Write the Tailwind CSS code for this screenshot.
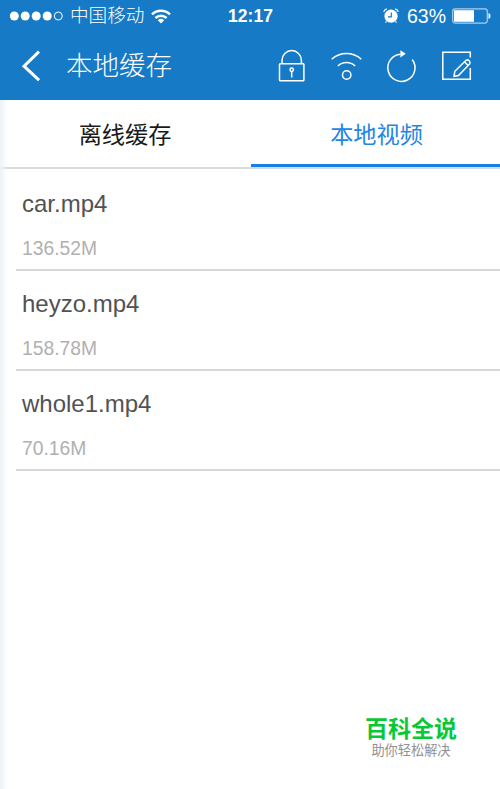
<!DOCTYPE html>
<html lang="zh-CN">
<head>
  <meta charset="UTF-8" />
  <meta name="viewport" content="width=device-width, initial-scale=1.0"/>
  <title>本地缓存</title>
  <script src="https://cdn.jsdelivr.net/npm/@tailwindcss/browser@4"></script>
</head>
<body class="relative flex h-[789px] flex-col overflow-hidden bg-white font-['Liberation_Sans','Noto_Sans_CJK_SC',sans-serif]">
  <header class="h-[100px] bg-[#167ac6] text-white">
    <!-- Status bar -->
    <div class="grid h-8 grid-cols-3 items-center">
      <div class="flex items-center pl-[9px]">
        <svg class="h-3 w-[55px] shrink-0" viewBox="0 0 55 12" fill="#fff">
          <circle cx="5.3" cy="6" r="4.5"/>
          <circle cx="16.2" cy="6" r="4.5"/>
          <circle cx="27.2" cy="6" r="4.5"/>
          <circle cx="38.2" cy="6" r="4.5"/>
          <circle cx="49.3" cy="6" r="4" fill="none" stroke="#fff" stroke-width="1"/>
        </svg>
        <span class="ml-[6px] text-[18.6px] leading-8 font-light whitespace-nowrap">中国移动</span>
        <svg class="ml-[7px] h-[15px] w-5 shrink-0" viewBox="0 0 20 15" fill="none" stroke="#fff" stroke-width="2.5">
          <path d="M1 5.3a13 13 0 0 1 18 0"/>
          <path d="M4.4 9a8.3 8.3 0 0 1 11.2 0"/>
          <path d="M10 14.5l-3.2-3.2a4.8 4.8 0 0 1 6.4 0z" fill="#fff" stroke="none"/>
        </svg>
      </div>
      <div class="pl-px text-center text-[17.5px] leading-8 font-bold">12:17</div>
      <div class="flex items-center justify-end pr-[9px]">
        <svg class="h-4 w-4 shrink-0" viewBox="0 0 16 16">
          <circle cx="8" cy="8.2" r="6.6" fill="#fff"/>
          <path d="M.8 4Q1.2 1.5 3.800 .9M12.200 .9Q14.800 1.500 15.200 4M3.500 13.300L2.500 14.700M12.500 13.300l1 1.400" fill="none" stroke="#fff" stroke-width="1.200"/>
          <path d="M8.300 4.600v4.200H5" fill="none" stroke="#167ac6" stroke-width="1.200"/>
        </svg>
        <span class="ml-[8px] text-[19.500px] leading-8">63%</span>
        <svg class="ml-[6px] h-4 w-[39px] shrink-0" viewBox="0 0 39 16">
          <rect x=".7" y=".9" width="34.600" height="14.200" rx="2.500" fill="none" stroke="#a9d0ee" stroke-width="1.200"/>
          <path d="M2 2.200h20v11.600H2z" fill="#fff"/>
          <path d="M36.500 5q2 .7 2 3t-2 3z" fill="#fff"/>
        </svg>
      </div>
    </div>
    <!-- Navigation -->
    <div class="flex h-[68px] items-center pr-[28px] pl-[20px]">
      <svg class="h-8 w-5 shrink-0" viewBox="0 0 20 32" fill="none" stroke="#fff" stroke-width="3">
        <path d="M19 1.700L4 16.200l15 14"/>
      </svg>
      <h1 class="ml-[26px] text-[26.500px] leading-[68px] font-light">本地缓存</h1>
      <div class="ml-auto flex items-center gap-[23px]">
        <svg class="h-9 w-[32px]" viewBox="0 0 32 36" fill="none" stroke="#fff" stroke-width="1.500">
          <rect x="4.500" y="15.800" width="24.400" height="17" rx=".8"/>
          <path d="M7 15.500v-3.200a9.700 9.700 0 0 1 19.400 0v3.200"/>
          <circle cx="16.700" cy="21.700" r="1.700"/>
          <path d="M16.700 23.500v6"/>
        </svg>
        <svg class="h-9 w-[32px]" viewBox="0 0 32 36" fill="none" stroke="#fff" stroke-width="1.500">
          <path d="M1.700 11.200a22 22 0 0 1 29.600 0"/>
          <path d="M7.900 18a12.500 12.500 0 0 1 17.200 0"/>
          <circle cx="16.700" cy="27" r="4.200"/>
        </svg>
        <svg class="h-9 w-[32px]" viewBox="0 0 32 36" fill="none" stroke="#fff" stroke-width="1.500">
          <path d="M15.500 6.200A13.600 13.600 0 1 0 27.200 11.500"/>
          <path d="M15.400 2.200l5.400 3.500-5.400 3.800z" fill="#fff" stroke="none"/>
        </svg>
        <svg class="h-9 w-[32px]" viewBox="0 0 32 36" fill="none" stroke="#fff" stroke-width="1.500">
          <path d="M30.300 9.500V4.300H2.800v27h27.500V20"/>
          <path d="M14 28.300l.8-5L26 12.300q1.800-1 3.200.4t.5 3.200L18.500 27.500zM24.400 13.800l3.800 3.700"/>
        </svg>
      </div>
    </div>
  </header>

  <!-- Tabs -->
  <nav class="flex h-[69px] border-b-2 border-[#d9dbdd] text-[23.200px] leading-[70px]">
    <div class="w-[250px] text-center text-[#1a1a1a]">离线缓存</div>
    <div class="ml-px h-[67px] flex-1 border-b-3 border-[#1480e8] pl-[2px] text-center text-[#2486e2]">本地视频</div>
  </nav>

  <!-- Video files -->
  <ul class="ml-4 text-[#525252]">
    <li class="h-[102px] border-b-2 border-[#d8d8d8] pt-[20px] pl-[6px]">
      <div class="text-[24px] leading-[30px]">car.mp4</div>
      <div class="mt-[18px] text-[19.300px] leading-6 text-[#b0b0b0]">136.52M</div>
    </li>
    <li class="h-[100px] border-b-2 border-[#d8d8d8] pt-[18px] pl-[6px]">
      <div class="text-[24px] leading-[30px]">heyzo.mp4</div>
      <div class="mt-[18px] text-[19.300px] leading-6 text-[#b0b0b0]">158.78M</div>
    </li>
    <li class="h-[100px] border-b-2 border-[#d8d8d8] pt-[18px] pl-[6px]">
      <div class="text-[24px] leading-[30px]">whole1.mp4</div>
      <div class="mt-[18px] text-[19.300px] leading-6 text-[#b0b0b0]">70.16M</div>
    </li>
  </ul>

  <!-- Brand mark -->
  <footer class="mt-auto mr-[42px] mb-[30px] w-[94px] self-end text-center whitespace-nowrap">
    <div class="text-[23px] leading-[28px] font-bold text-[#09c837]">百科全说</div>
    <div class="text-[13.200px] leading-[16px] text-[#919191]">助你轻松解决</div>
  </footer>

  <!-- Left edge shading -->
  <div class="absolute top-[100px] bottom-0 left-0 w-2 bg-linear-to-r from-[#eef2f6] to-transparent"></div>
</body>
</html>
